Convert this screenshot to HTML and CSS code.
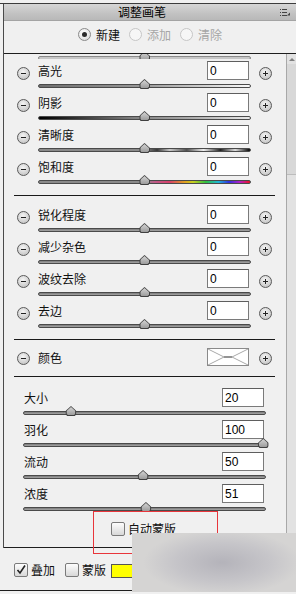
FILE: index.html
```html
<!DOCTYPE html>
<html lang="zh-CN">
<head>
  <meta charset="UTF-8" />
  <title>调整画笔</title>
  <link rel="stylesheet" href="styles.css">
</head>
<body>
  <div class="topline"></div>
  <div class="panel">
    <div class="title">
      <span>调整画笔</span>
      <svg class="menu" width="11" height="7" viewBox="0 0 11 7">
        <path d="M0 0.5h1M2 0.5h5M0 3.5h1M2 3.5h5M0 6.5h1M2 6.5h5" stroke="#444" stroke-width="1"/>
        <path d="M10 3.5v3h-3z" fill="#444"/>
      </svg>
    </div>

    <div class="modes">
      <label class="radio on"><i></i>新建</label>
      <label class="radio off"><i></i>添加</label>
      <label class="radio off"><i></i>清除</label>
    </div>

    <div class="body">
      <div class="scroll">
        <div class="stub"><div class="track"><b class="thumb" style="left:50%"></b></div></div>

        <div class="adj">
          <span class="pm minus"></span>
          <div class="main">
            <div class="top"><span class="name">高光</span><input class="num" value="0"></div>
            <div class="track hl"><b class="thumb" style="left:50%"></b></div>
          </div>
          <span class="pm plus"></span>
        </div>
        <div class="adj">
          <span class="pm minus"></span>
          <div class="main">
            <div class="top"><span class="name">阴影</span><input class="num" value="0"></div>
            <div class="track sh"><b class="thumb" style="left:50%"></b></div>
          </div>
          <span class="pm plus"></span>
        </div>
        <div class="adj">
          <span class="pm minus"></span>
          <div class="main">
            <div class="top"><span class="name">清晰度</span><input class="num" value="0"></div>
            <div class="track cl"><b class="thumb" style="left:50%"></b></div>
          </div>
          <span class="pm plus"></span>
        </div>
        <div class="adj">
          <span class="pm minus"></span>
          <div class="main">
            <div class="top"><span class="name">饱和度</span><input class="num" value="0"></div>
            <div class="track sat"><b class="thumb" style="left:50%"></b></div>
          </div>
          <span class="pm plus"></span>
        </div>

        <div class="sep"></div>

        <div class="adj">
          <span class="pm minus"></span>
          <div class="main">
            <div class="top"><span class="name">锐化程度</span><input class="num" value="0"></div>
            <div class="track"><b class="thumb" style="left:50%"></b></div>
          </div>
          <span class="pm plus"></span>
        </div>
        <div class="adj">
          <span class="pm minus"></span>
          <div class="main">
            <div class="top"><span class="name">减少杂色</span><input class="num" value="0"></div>
            <div class="track"><b class="thumb" style="left:50%"></b></div>
          </div>
          <span class="pm plus"></span>
        </div>
        <div class="adj">
          <span class="pm minus"></span>
          <div class="main">
            <div class="top"><span class="name">波纹去除</span><input class="num" value="0"></div>
            <div class="track"><b class="thumb" style="left:50%"></b></div>
          </div>
          <span class="pm plus"></span>
        </div>
        <div class="adj">
          <span class="pm minus"></span>
          <div class="main">
            <div class="top"><span class="name">去边</span><input class="num" value="0"></div>
            <div class="track"><b class="thumb" style="left:50%"></b></div>
          </div>
          <span class="pm plus"></span>
        </div>

        <div class="sep"></div>

        <div class="color-row">
          <span class="pm minus"></span>
          <div class="main">
            <span class="name">颜色</span>
            <span class="swatch">
              <svg width="40" height="16" viewBox="0 0 40 16">
                <path d="M0 0L16 8L0 16M40 0L24 8L40 16" stroke="#a8a8a8" stroke-width="1" fill="none"/>
                <path d="M16 8H24" stroke="#666" stroke-width="1.4"/>
              </svg>
            </span>
          </div>
          <span class="pm plus"></span>
        </div>

        <div class="sep tight"></div>

        <div class="brush">
          <div class="top"><span class="name">大小</span><input class="num" value="20"></div>
          <div class="track"><b class="thumb" style="left:19.5%"></b></div>
        </div>
        <div class="brush">
          <div class="top"><span class="name">羽化</span><input class="num" value="100"></div>
          <div class="track"><b class="thumb" style="left:99.3%"></b></div>
        </div>
        <div class="brush">
          <div class="top"><span class="name">流动</span><input class="num" value="50"></div>
          <div class="track"><b class="thumb" style="left:49.4%"></b></div>
        </div>
        <div class="brush">
          <div class="top"><span class="name">浓度</span><input class="num" value="51"></div>
          <div class="track"><b class="thumb" style="left:50.6%"></b></div>
        </div>

        <label class="automask"><span class="check"></span>自动蒙版</label>
      </div>

      <div class="bar">
        <i class="up"></i>
        <i class="knob"></i>
      </div>
    </div>
  </div>

  <div class="footer">
    <span class="check">
      <svg width="12" height="12" viewBox="0 0 12 12">
        <path d="M2.5 6L5 9L10 1.5" stroke="#222" stroke-width="1.6" fill="none"/>
      </svg>
    </span>
    <span class="opt">叠加</span>
    <span class="check"></span>
    <span class="opt">蒙版</span>
    <span class="yellow"></span>
  </div>

  <div class="note"></div>
  <div class="blur"></div>
</body>
</html>
```

FILE: styles.css
```css
* {
  box-sizing: border-box;
}

body {
  margin: 0;
  width: 296px;
  height: 594px;
  overflow: hidden;
  position: relative;
  background: #f0f0f0;
  font-family: "Noto Sans CJK SC", "Liberation Sans", sans-serif;
  font-size: 12px;
  color: #111;
}

.topline {
  height: 1px;
  margin-top: 3px;
  background: #3c3c3c;
}

.panel {
  margin-left: 3px;
  border-left: 1px solid #4a4a4a;
}

.title {
  height: 17px;
  display: flex;
  align-items: center;
  border-bottom: 1px solid #a4a4a4;
  background: linear-gradient(#d6d6d6, #c2c2c2 60%, #b8b8b8);
}

.title span {
  flex: 1;
  text-align: center;
  line-height: 16px;
  color: #000;
}

.menu {
  margin-right: 5px;
}

.modes {
  height: 33px;
  display: flex;
  align-items: flex-start;
  gap: 9px;
  padding: 7px 0 0 74px;
  border-bottom: 1px solid #1e1e1e;
}

.radio {
  display: flex;
  align-items: center;
  gap: 5px;
  line-height: 13px;
}

.radio i {
  width: 13px;
  height: 13px;
  border-radius: 50%;
  border: 1px solid #8a8a8a;
  background: radial-gradient(circle at 40% 35%, #fff, #d6d6d6);
  display: flex;
  align-items: center;
  justify-content: center;
}

.radio.on i::before {
  content: "";
  width: 5px;
  height: 5px;
  border-radius: 50%;
  background: #2a2a2a;
}

.radio.off {
  color: #a6a6a6;
}

.radio.off i {
  border-color: #c6c6c6;
  background: #f6f6f6;
}

.body {
  display: flex;
  height: 494px;
  border-bottom: 1px solid #1e1e1e;
}

.scroll {
  flex: 1;
  overflow: hidden;
}

.bar {
  width: 10px;
  border-left: 1px solid #a8a8a8;
  background: #e2e2e2;
  display: flex;
  flex-direction: column;
  align-items: center;
}

.up {
  width: 0;
  height: 0;
  margin-top: 4px;
  border-left: 3px solid transparent;
  border-right: 3px solid transparent;
  border-bottom: 3px solid #808080;
}

.knob {
  width: 100%;
  height: 111px;
  margin-top: 3px;
  background: #d8d8d8;
  border-bottom: 1px solid #bcbcbc;
}

/* sliders */
.track {
  position: relative;
  height: 4px;
  margin-top: 4px;
  border: 1px solid #4a4a4a;
  border-radius: 2px;
  background: linear-gradient(#7a7a7a, #a6a6a6);
}

.track.hl {
  background: linear-gradient(to right, #6e6e6e, #9a9a9a 50%, #fafafa);
}

.track.sh {
  background: linear-gradient(to right, #000, #1a1a1a 10%, #808080 45%, #a8a8a8 70%, #e8e8e8);
}

.track.cl {
  background: linear-gradient(to right, #8a8a8a 50%, #3a3a3a 56%, #c8c8c8 62%, #505050 70%, #eee 78%, #222 86%, #ddd 93%, #000);
}

.track.sat {
  background: linear-gradient(to right, #8a8a8a 50%, #c05a88 55%, #d8406a 62%, #e0a020 69%, #c8d020 73%, #30c040 79%, #20b8d8 85%, #3030e0 90%, #b020c8 95%, #f01020);
}

.thumb {
  position: absolute;
  top: -6px;
  width: 11px;
  height: 10px;
  transform: translateX(-50%);
  background: #404040;
  clip-path: polygon(50% 0, 100% 50%, 100% 80%, 85% 100%, 15% 100%, 0 80%, 0 50%);
}

.thumb::before {
  content: "";
  position: absolute;
  inset: 1px;
  background: linear-gradient(#d4d4d4, #9c9c9c);
  clip-path: polygon(50% 0, 100% 50%, 100% 80%, 85% 100%, 15% 100%, 0 80%, 0 50%);
}

.stub {
  height: 5px;
  overflow: hidden;
}

.stub .track {
  margin: 2px 0 0 34px;
  width: 213px;
  background: #c8c8c8;
  border-color: #8a8a8a;
}

/* adjustment rows */
.adj {
  display: flex;
  height: 32px;
}

.pm {
  position: relative;
  flex: none;
  width: 13px;
  height: 13px;
  margin-top: 8px;
  border-radius: 50%;
  border: 1px solid #5a5a5a;
  background: radial-gradient(circle at 45% 35%, #f6f6f6, #c2c2c2 85%);
  display: flex;
  align-items: center;
  justify-content: center;
}

.pm::before {
  content: "";
  width: 5px;
  height: 1px;
  background: #222;
}

.plus::after {
  content: "";
  position: absolute;
  left: 5px;
  top: 3px;
  width: 1px;
  height: 5px;
  background: #222;
}

.minus {
  margin-left: 13px;
}

.plus {
  margin-left: 8px;
}

.main {
  width: 213px;
  margin-left: 8px;
}

.top {
  height: 21px;
  padding-top: 2px;
  display: flex;
  align-items: center;
  justify-content: space-between;
}

.name {
  line-height: 19px;
}

.num {
  width: 42px;
  height: 19px;
  margin: 0 2px 0 0;
  padding: 0 2px;
  border: 1px solid #7a7a7a;
  border-top-color: #5e5e5e;
  background: #fff;
  font: 12px "Liberation Sans", sans-serif;
  color: #000;
  outline: none;
}

.sep {
  height: 1px;
  margin: 8px 11px 7px 10px;
  background: #1a1a1a;
}

.sep.tight {
  margin-top: 0;
  margin-bottom: 9px;
}

.color-row {
  display: flex;
  height: 29px;
}

.color-row .pm {
  margin-top: 5px;
}

.color-row .main {
  height: 19px;
  padding-top: 1px;
  display: flex;
  align-items: center;
  justify-content: space-between;
}

.swatch {
  width: 42px;
  height: 18px;
  margin-right: 2px;
  border: 1px solid #8a8a8a;
  background: #fff;
  display: flex;
}

/* brush rows */
.brush {
  height: 32px;
}

.brush .top {
  padding: 2px 22px 0 20px;
}

.brush .num {
  margin-right: 0;
}

.brush .track {
  margin: 4px 20px 0 19px;
}

.check {
  flex: none;
  width: 14px;
  height: 14px;
  border: 1px solid #7a7a7a;
  border-radius: 2px;
  background: linear-gradient(#fdfdfd, #d8d8d8);
  display: flex;
  align-items: center;
  justify-content: center;
}

.automask {
  display: flex;
  align-items: center;
  gap: 3px;
  margin-top: 8px;
  padding-left: 107px;
  line-height: 14px;
}

.footer {
  height: 43px;
  display: flex;
  align-items: flex-start;
  padding: 15px 0 0 14px;
  border-bottom: 1px solid #1e1e1e;
  line-height: 14px;
}

.opt {
  margin: 0 10px 0 3px;
}

.opt + .check + .opt {
  margin-right: 5px;
}

.yellow {
  width: 40px;
  height: 14px;
  margin-top: 1px;
  background: #ffff00;
  border: 1px solid #555;
}

/* annotation and blurred patch on top of the screenshot */
.note {
  position: absolute;
  left: 93px;
  top: 511px;
  width: 125px;
  height: 43px;
  border: 1px solid #e8353b;
}

.blur {
  position: absolute;
  left: 132px;
  top: 533px;
  width: 164px;
  height: 59px;
  background: radial-gradient(ellipse 48% 55% at 55% 50%, #b4b3ba, #c6c5c9 60%, #d5d4d3);
}
```
